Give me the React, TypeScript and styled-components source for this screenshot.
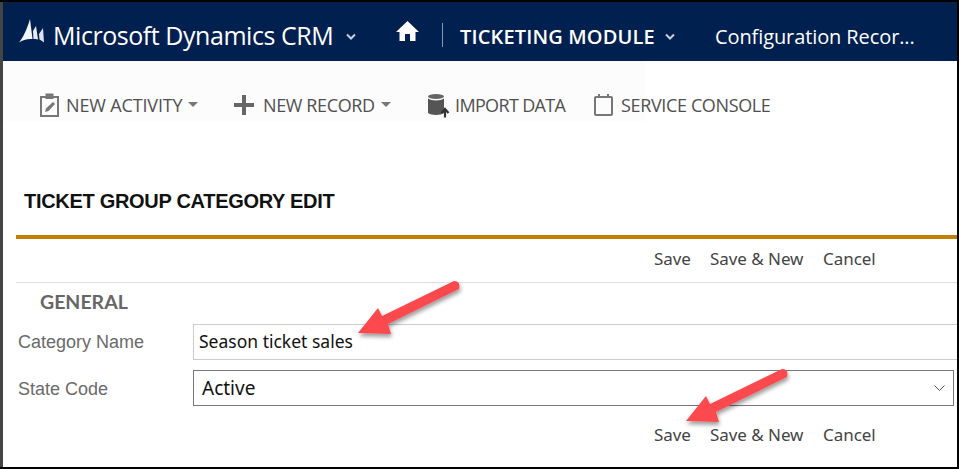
import React from "react";
import styled, { createGlobalStyle } from "styled-components";

const segoe = `"Open Sans", "Noto Sans", "Liberation Sans", sans-serif`;
const arial = `"Liberation Sans", Arial, sans-serif`;

const GlobalStyle = createGlobalStyle`
  html, body { margin: 0; padding: 0; background: #fff; }
  * { box-sizing: border-box; }
`;

const Frame = styled.div`
  position: relative;
  width: 959px;
  height: 469px;
  overflow: hidden;
  background: #fff;
  border-style: solid;
  border-color: #000;
  border-width: 2px 2px 2px 0;
  box-shadow: inset 3px 0 0 #444;
`;

const Header = styled.header`
  height: 59px;
  margin-left: 3px;
  padding-top: 6px;
  background: #002050;
  color: #fff;
  font-family: ${segoe};
  display: flex;
  align-items: center;
  white-space: nowrap;
`;

const Logo = styled.svg`
  width: 25px;
  height: 24px;
  margin-left: 16px;
  margin-right: 9px;
  margin-top: -7px;
`;

const Brand = styled.span`
  font-size: 25px;
  letter-spacing: -0.45px;
  width: 281px;
  margin-top: 0;
`;

const Chevron = styled.svg<{ $ml: number }>`
  width: 10px;
  height: 7px;
  margin-left: ${(p) => p.$ml}px;
  margin-top: 3px;
  flex: none;
`;

const HomeIcon = styled.svg`
  width: 23px;
  height: 22px;
  margin-left: 40px;
  margin-top: -7px;
`;

const Divider = styled.span`
  width: 1px;
  height: 24px;
  background: #8a97ad;
  margin-left: 23px;
`;

const ModuleName = styled.span`
  font-size: 20px;
  font-weight: 600;
  letter-spacing: 0.15px;
  margin-left: 17px;
  margin-top: 4px;
  width: 205px;
`;

const Crumb = styled.span`
  font-size: 20px;
  letter-spacing: -0.1px;
  margin-left: 40px;
  margin-top: 4px;
`;

const Toolbar = styled.nav`
  height: 60px;
  margin-left: 3px;
  display: flex;
  align-items: center;
  padding: 28px 0 0 35px;
  background: linear-gradient(to right, #fcfcfc 642px, #fff 642px);
  font-family: ${segoe};
  font-size: 18px;
  color: #505050;
  white-space: nowrap;
`;

const ToolItem = styled.div<{ $w: number; $ls: number }>`
  display: flex;
  align-items: center;
  width: ${(p) => p.$w}px;
  letter-spacing: ${(p) => p.$ls}px;
  flex: none;
`;

const ToolIcon = styled.svg<{ $mr: number }>`
  width: 24px;
  height: 26px;
  margin-right: ${(p) => p.$mr}px;
  flex: none;
`;

const Caret = styled.span`
  width: 0;
  height: 0;
  margin-left: 6px;
  margin-top: -2px;
  border-left: 5px solid transparent;
  border-right: 5px solid transparent;
  border-top: 5px solid #777;
`;

const Title = styled.h1`
  margin: 0 0 0 24px;
  padding-top: 70px;
  height: 114px;
  font-family: ${arial};
  font-size: 20px;
  line-height: 20px;
  font-weight: 700;
  letter-spacing: -0.3px;
  color: #111;
`;

const FormArea = styled.section`
  margin-left: 16px;
  border-top: 4px solid #c08000;
`;

const Actions = styled.div<{ $line?: boolean }>`
  height: ${(p) => (p.$line ? 44 : 40)}px;
  display: flex;
  align-items: center;
  padding: 0 0 4px 638px;
  border-bottom: ${(p) => (p.$line ? "1px solid #ddd" : "none")};
  font-family: "Noto Sans", ${segoe};
  font-size: 17px;
  letter-spacing: -0.05px;
  color: #444;
  white-space: nowrap;
`;

const ActionLink = styled.span<{ $w: number }>`
  width: ${(p) => p.$w}px;
  flex: none;
`;

const SectionName = styled.h2`
  margin: 0;
  padding: 0 0 4px 24px;
  height: 41px;
  display: flex;
  align-items: center;
  font-family: "Lato", ${arial};
  font-size: 19.5px;
  font-weight: 700;
  color: #666;
`;

const FieldRow = styled.div`
  display: grid;
  grid-template-columns: 177px 1fr;
  align-items: center;
  height: 36px;
  margin-bottom: 10px;
`;

const FieldLabel = styled.label<{ $drop?: number }>`
  padding: ${(p) => p.$drop ?? 0}px 0 0 2px;
  font-family: ${arial};
  font-size: 18px;
  color: #6a6a6a;
`;

const TextBox = styled.div`
  height: 36px;
  border: 1px solid #ccc;
  border-right: none;
  padding: 0 0 2px 5px;
  display: flex;
  align-items: center;
  font-family: "Noto Sans", ${segoe};
  font-size: 17.5px;
  color: #111;
`;

const SelectBox = styled.div`
  height: 36px;
  width: 761px;
  border: 1px solid #777;
  padding: 0 8px 0 8px;
  display: flex;
  align-items: center;
  justify-content: space-between;
  font-family: "Noto Sans", ${segoe};
  font-size: 19px;
  color: #111;
`;

const Annotation = styled.svg`
  position: absolute;
  left: 0;
  top: 0;
  width: 959px;
  height: 469px;
  pointer-events: none;
`;

// arrow outline relative to its tip
const arrow = (x: number, y: number) =>
  `M${x},${y} L${x + 20},${y - 25} L${x + 24},${y - 17} L${x + 96},${y - 52} Q${x + 103},${y - 52} ${x + 101},${y - 44} L${x + 30},${y - 9} L${x + 33},${y + 1} Z`;

export default function App() {
  return (
    <>
      <GlobalStyle />
      <Frame>
        <Header>
          <Logo viewBox="0 0 25 24">
            <path d="M0 23.500 C4 19 8 10 11 0 L13.500 20 C8 19.500 4 21 0 23.500 Z" fill="#f2f4f7" />
            <path d="M14 12 L17 7 L19 20.500 C17.500 20 15.500 20 14.500 20 Z" fill="#e8ebf0" />
            <path d="M20 15 L24 9 L25 23.500 C23.500 22 21.500 21 20.500 20.500 Z" fill="#dfe3e9" />
          </Logo>
          <Brand>Microsoft Dynamics CRM</Brand>
          <Chevron $ml={12} viewBox="0 0 10 7">
            <path d="M1 1.5 L5 5.5 L9 1.5" fill="none" stroke="#c8d0dc" strokeWidth="2" />
          </Chevron>
          <HomeIcon viewBox="0 0 23 22">
            <path d="M11.5 1 L23 12 L19.5 12 L19.5 21 L14 21 L14 14 L9 14 L9 21 L3.5 21 L3.5 12 L0 12 Z" fill="#fff" />
          </HomeIcon>
          <Divider />
          <ModuleName>TICKETING MODULE</ModuleName>
          <Chevron $ml={0} viewBox="0 0 10 7">
            <path d="M1 1.5 L5 5.5 L9 1.5" fill="none" stroke="#c8d0dc" strokeWidth="2" />
          </Chevron>
          <Crumb>Configuration Recor...</Crumb>
        </Header>

        <Toolbar>
          <ToolItem $w={194} $ls={-0.15}>
            <ToolIcon $mr={4} viewBox="0 0 24 26">
              <rect x="3" y="5" width="17" height="19" fill="none" stroke="#777" strokeWidth="2" />
              <rect x="7.500" y="1.500" width="8" height="5.500" fill="#777" />
              <path d="M7 20 L8 16.500 L15 10 L17 12 L10.500 19 Z" fill="#777" />
            </ToolIcon>
            NEW ACTIVITY
            <Caret />
          </ToolItem>
          <ToolItem $w={194} $ls={-0.38}>
            <ToolIcon $mr={7} viewBox="0 0 24 26">
              <path d="M10 3 H14 V11 H22 V15 H14 V23 H10 V15 H2 V11 H10 Z" fill="#666" />
            </ToolIcon>
            NEW RECORD
            <Caret />
          </ToolItem>
          <ToolItem $w={166} $ls={-0.65}>
            <ToolIcon $mr={5} viewBox="0 0 24 26">
              <ellipse cx="10" cy="4.500" rx="8" ry="2.500" fill="#666" />
              <path d="M2 6.500 C5 9 15 9 18 6.500 V21 C15 23.500 5 23.500 2 21 Z" fill="#555" />
              <path d="M19 25.500 V17.500 M15.500 21 L19 17 L22.500 21" fill="none" stroke="#333" strokeWidth="2.200" />
            </ToolIcon>
            IMPORT DATA
          </ToolItem>
          <ToolItem $w={190} $ls={-0.36}>
            <ToolIcon $mr={5} viewBox="0 0 24 26">
              <rect x="3" y="5" width="17" height="18" rx="1" fill="none" stroke="#777" strokeWidth="2" />
              <path d="M7 2 V6 M16 2 V6" stroke="#777" strokeWidth="2" />
            </ToolIcon>
            SERVICE CONSOLE
          </ToolItem>
        </Toolbar>

        <Title>TICKET GROUP CATEGORY EDIT</Title>

        <FormArea>
          <Actions $line>
            <ActionLink $w={56}>Save</ActionLink>
            <ActionLink $w={113}>Save &amp; New</ActionLink>
            <ActionLink $w={60}>Cancel</ActionLink>
          </Actions>
          <SectionName>GENERAL</SectionName>
          <FieldRow>
            <FieldLabel>Category Name</FieldLabel>
            <TextBox>Season ticket sales</TextBox>
          </FieldRow>
          <FieldRow>
            <FieldLabel $drop={2}>State Code</FieldLabel>
            <SelectBox>
              Active
              <svg width="11" height="7" viewBox="0 0 11 7">
                <path d="M0.500 0.500 L5.500 5.500 L10.500 0.500" fill="none" stroke="#555" strokeWidth="1" />
              </svg>
            </SelectBox>
          </FieldRow>
          <Actions>
            <ActionLink $w={56}>Save</ActionLink>
            <ActionLink $w={113}>Save &amp; New</ActionLink>
            <ActionLink $w={60}>Cancel</ActionLink>
          </Actions>
        </FormArea>

        <Annotation viewBox="0 2 959 469">
          <defs>
            <filter id="arrowShadow" x="-20%" y="-20%" width="150%" height="150%">
              <feDropShadow dx="1" dy="3" stdDeviation="2" floodColor="#000" floodOpacity="0.4" />
            </filter>
          </defs>
          <path d={arrow(358, 333)} fill="#fb4a4e" filter="url(#arrowShadow)" />
          <path d={arrow(686, 421)} fill="#fb4a4e" filter="url(#arrowShadow)" />
        </Annotation>
      </Frame>
    </>
  );
}
